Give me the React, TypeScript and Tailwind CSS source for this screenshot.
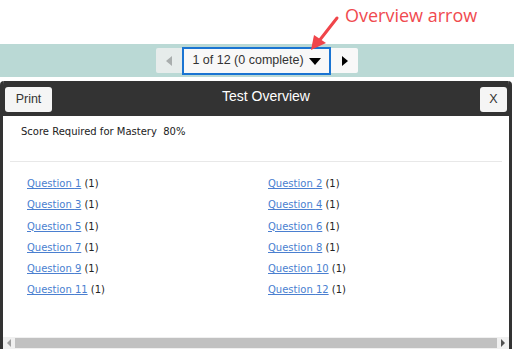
import React from "react";

const questions = Array.from({ length: 12 }, (_, i) => i + 1);

export default function App() {
  return (
    <div className="relative w-[514px] h-[349px] overflow-hidden bg-white font-['Liberation_Sans',Arial,sans-serif]">
      {/* annotation */}
      <div className="absolute left-[345px] top-[3px] text-[18px] leading-[24px] text-[#f04a4f] font-['Open_Sans',sans-serif]">
        Overview arrow
      </div>
      <svg className="absolute left-[300px] top-[10px]" width="50" height="50" viewBox="0 0 50 50">
        <line x1="37" y1="8" x2="19" y2="31" stroke="#f0454a" strokeWidth="3" strokeLinecap="round" />
        <polygon points="11,40 14,25 26,33" fill="#f0454a" />
      </svg>

      <div className="h-[44px]" />

      {/* nav band */}
      <div className="h-[33px] bg-[#bad9d5] flex items-center justify-center">
        <button className="w-[26px] h-[25px] bg-[#e6eceb] rounded-l-[2px] flex items-center justify-center">
          <span className="w-0 h-0 border-y-[5px] border-y-transparent border-r-[6px] border-r-[#a9aeae]" />
        </button>
        <div className="w-[149px] h-[28px] border-2 border-[#1a74d2] bg-[#f8f8f8] flex items-center justify-center gap-[5px] text-[12.5px] text-[#333]">
          <span>1 of 12 (0 complete)</span>
          <span className="w-0 h-0 border-x-[6px] border-x-transparent border-t-[7px] border-t-black mt-[2px]" />
        </div>
        <button className="w-[27px] h-[25px] bg-[#f8f8f8] rounded-r-[2px] flex items-center justify-center">
          <span className="w-0 h-0 border-y-[5px] border-y-transparent border-l-[6px] border-l-black" />
        </button>
      </div>

      {/* modal */}
      <div className="mt-[4px] w-[512px] border-x-[3px] border-[#333] rounded-t-[4px] overflow-hidden">
        <div className="h-[35px] bg-[#333] flex items-center justify-between px-[2px]">
          <button className="w-[47px] h-[25px] bg-[#f5f5f5] rounded-[3px] text-[12.5px] text-[#333] mt-[2px]">
            Print
          </button>
          <div className="text-white text-[14px] -mt-[4px]">Test Overview</div>
          <button className="w-[27px] h-[25px] bg-[#f5f5f5] rounded-[3px] text-[12.5px] text-[#333] mt-[2px]">
            X
          </button>
        </div>
        <div className="bg-white h-[233px] flex flex-col font-['DejaVu_Sans',Verdana,sans-serif] text-[10px] text-[#222]">
          <div className="pl-[18px] pt-[8px] h-[45px] whitespace-pre">Score Required for Mastery  80%</div>
          <div className="mx-[7px] border-t border-[#e8e8e8]" />
          <div className="grid grid-cols-2 pl-[24px] pt-[15px] gap-y-[8px]">
            {questions.map((q) => (
              <div key={q} className="h-[13.3px] leading-[13px]">
                <a href="#" className="text-[#4a7fd0] underline">Question {q}</a>{" "}
                <span>(1)</span>
              </div>
            ))}
          </div>
          <div className="flex-1" />
          <div className="h-[12px] bg-[#f0f0f0] flex items-center">
            <div className="w-[12px] flex justify-center">
              <span className="w-0 h-0 border-y-[4px] border-y-transparent border-r-[4px] border-r-[#a0a0a0]" />
            </div>
            <div className="flex-1 h-[10px] bg-[#c1c1c1]" />
            <div className="w-[12px] flex justify-center">
              <span className="w-0 h-0 border-y-[4px] border-y-transparent border-l-[4px] border-l-[#505050]" />
            </div>
          </div>
        </div>
      </div>
    </div>
  );
}
